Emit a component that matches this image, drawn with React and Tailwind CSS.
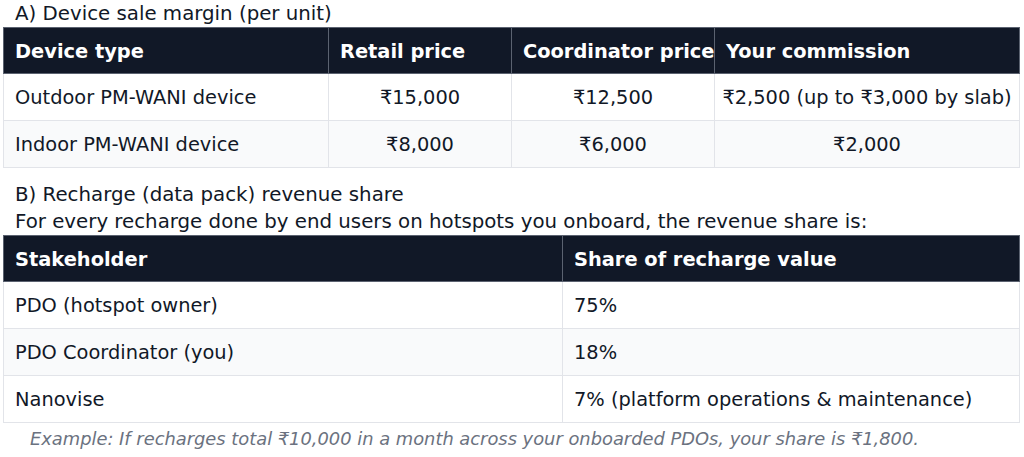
export default function App() {
  const font = { fontFamily: '"DejaVu Sans", "Noto Sans", sans-serif' };
  const th = "border border-[#5b6270] bg-[#111827] text-white font-bold text-left pl-[11px] pr-3 pt-[2px] h-[46px] whitespace-nowrap";
  const td = "border border-[#e2e4e9] pl-[11px] pr-3 pt-[2px] h-[47px] whitespace-nowrap";
  const tdc = "border border-[#e2e4e9] px-0 pt-[2px] h-[47px] whitespace-nowrap text-center";
  return (
    <div className="w-[1024px] h-[457px] bg-white text-[#111827] text-[19.4px] px-[3px] pt-[1px]" style={font}>
      <div className="leading-[26px] pl-3 text-[19.8px]">A) Device sale margin (per unit)</div>
      <table className="w-[1016px] table-fixed border-collapse">
        <colgroup>
          <col className="w-[325px]" />
          <col className="w-[183px]" />
          <col className="w-[203px]" />
          <col className="w-[305px]" />
        </colgroup>
        <thead>
          <tr>
            <th className={th}>Device type</th>
            <th className={th}>Retail price</th>
            <th className={th}>Coordinator price</th>
            <th className={th}>Your commission</th>
          </tr>
        </thead>
        <tbody>
          <tr className="bg-white">
            <td className={td}>Outdoor PM-WANI device</td>
            <td className={tdc}>₹15,000</td>
            <td className={tdc}>₹12,500</td>
            <td className={tdc}>₹2,500 (up to ₹3,000 by slab)</td>
          </tr>
          <tr className="bg-[#f9fafb]">
            <td className={td}>Indoor PM-WANI device</td>
            <td className={tdc}>₹8,000</td>
            <td className={tdc}>₹6,000</td>
            <td className={tdc}>₹2,000</td>
          </tr>
        </tbody>
      </table>
      <div className="mt-[13px] leading-[27px] pl-3 text-[19.8px]">
        <div>B) Recharge (data pack) revenue share</div>
        <div>For every recharge done by end users on hotspots you onboard, the revenue share is:</div>
      </div>
      <table className="w-[1016px] table-fixed border-collapse">
        <colgroup>
          <col className="w-[559px]" />
          <col className="w-[457px]" />
        </colgroup>
        <thead>
          <tr>
            <th className={th}>Stakeholder</th>
            <th className={th}>Share of recharge value</th>
          </tr>
        </thead>
        <tbody>
          <tr className="bg-white">
            <td className={td}>PDO (hotspot owner)</td>
            <td className={td}>75%</td>
          </tr>
          <tr className="bg-[#f9fafb]">
            <td className={td}>PDO Coordinator (you)</td>
            <td className={td}>18%</td>
          </tr>
          <tr className="bg-white">
            <td className={td}>Nanovise</td>
            <td className={td}>7% (platform operations &amp; maintenance)</td>
          </tr>
        </tbody>
      </table>
      <div className="mt-[2px] leading-[27px] pl-[27px] italic text-[#6b7280] text-[17.85px]">
        Example: If recharges total ₹10,000 in a month across your onboarded PDOs, your share is ₹1,800.
      </div>
    </div>
  );
}
